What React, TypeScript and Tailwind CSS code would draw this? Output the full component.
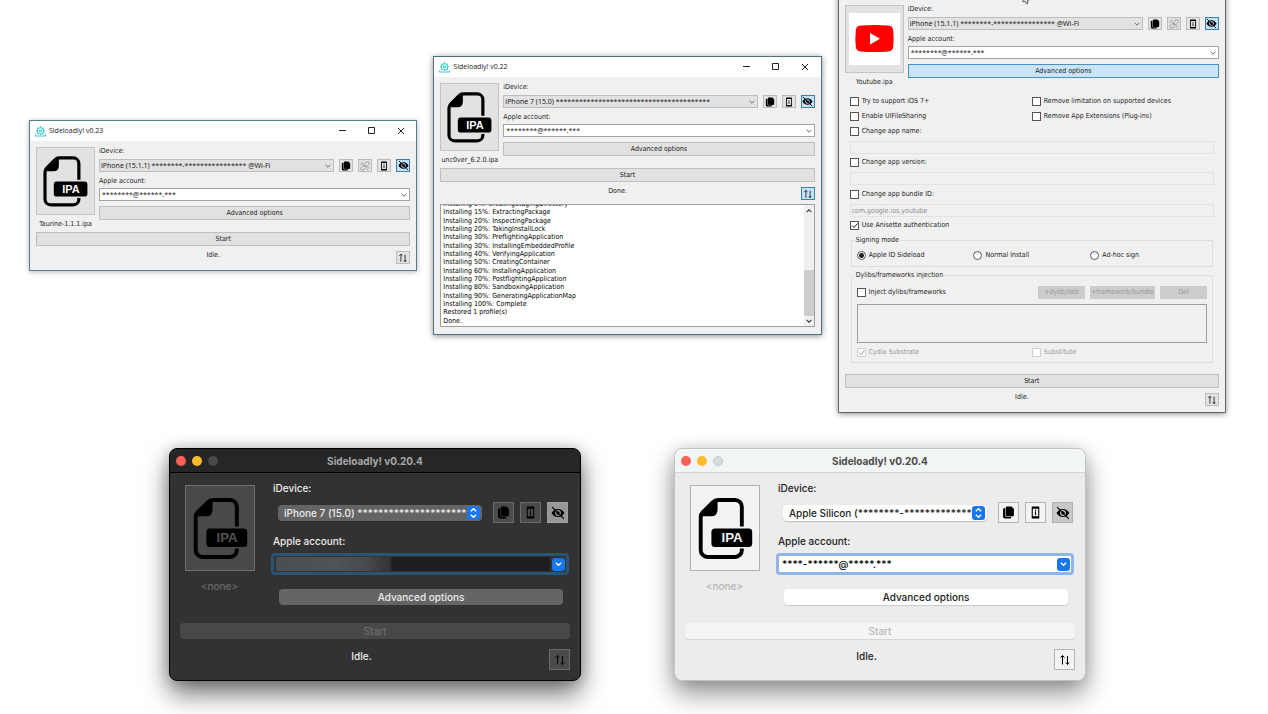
import { ReactNode } from 'react';
import clsx from 'clsx';

type Theme = 'dark' | 'light';

interface DeviceFormProps {
  id: string;
  device: string;
  fileName: string;
  artwork: ReactNode;
  withUnlink?: boolean;
  advancedOpen?: boolean;
}

const LOG_LINES = [
  'Installing 5%: CreatingStagingDirectory',
  'Installing 15%: ExtractingPackage',
  'Installing 20%: InspectingPackage',
  'Installing 20%: TakingInstallLock',
  'Installing 30%: PreflightingApplication',
  'Installing 30%: InstallingEmbeddedProfile',
  'Installing 40%: VerifyingApplication',
  'Installing 50%: CreatingContainer',
  'Installing 60%: InstallingApplication',
  'Installing 70%: PostflightingApplication',
  'Installing 80%: SandboxingApplication',
  'Installing 90%: GeneratingApplicationMap',
  'Installing 100%: Complete',
  'Restored 1 profile(s)',
  'Done.',
];

/* ---------- icons ---------- */

function IpaIcon({ className, textFill }: { className: string; textFill: string }) {
  return (
    <svg viewBox="0 0 210 255" className={className} aria-hidden="true">
      <path
        d="M157 123V62a21 21 0 0 0-21-21H84c-8 0-12 2-17 7L37 78c-5 5-7 9-7 16v102a21 21 0 0 0 21 21h85a21 21 0 0 0 21-21v-5"
        fill="none"
        stroke="#000"
        strokeWidth="12"
      />
      <path d="M82 39v31q0 21-21 21H28L42 70 66 46z" fill="#000" />
      <rect x="63" y="129" width="126" height="57" rx="11" fill="#000" />
      <text
        x="127"
        y="172"
        textAnchor="middle"
        fontFamily="Liberation Sans, sans-serif"
        fontWeight="700"
        fontSize="41"
        fill={textFill}
      >
        IPA
      </text>
    </svg>
  );
}

function YoutubeIcon() {
  return (
    <svg viewBox="0 0 51 52" className="h-[52px] w-[51px]" aria-hidden="true">
      <rect width="51" height="52" fill="#fff" />
      <path
        d="M12 12.5q13.500-1 27 0c3.500.2 4.800 1.700 5.200 5q.900 8 0 16c-.4 3.300-1.700 4.700-5.200 5q-13.500 1-27 0c-3.500-.3-4.800-1.700-5.200-5q-.9-8 0-16c.4-3.300 1.700-4.800 5.200-5z"
        fill="#f00"
      />
      <path d="M21 20l10 5.700L21 31.500z" fill="#fff" />
    </svg>
  );
}

function AppIcon() {
  return (
    <svg viewBox="0 0 32 32" className="size-[11px]" fill="none" strokeWidth="3" aria-hidden="true">
      <g stroke="#36cfc4">
        <circle cx="16" cy="14" r="9" />
        <circle cx="16" cy="14" r="3" />
        <path d="M16 1v4M16 23v3M3 14h4M25 14h4M7 5l3 3M25 5l-3 3M7 23l3-3M25 23l-3-3" />
      </g>
      <path d="M1 24v5h30v-5" stroke="#45c3ee" />
    </svg>
  );
}

function CopyIcon({ className }: { className: string }) {
  return (
    <svg viewBox="0 0 24 24" className={className} aria-hidden="true">
      <path d="M9 1h8.500L22 5.500V17a2 2 0 0 1-2 2H9a2 2 0 0 1-2-2V3a2 2 0 0 1 2-2z" />
      <path d="M6 4v14a2 2 0 0 0 2 2h9v1a2 2 0 0 1-2 2H5a3 3 0 0 1-3-3V6a2 2 0 0 1 2-2z" />
    </svg>
  );
}

function UnlinkIcon({ className }: { className: string }) {
  return (
    <svg
      viewBox="0 0 24 24"
      className={className}
      fill="none"
      stroke="#8c8c8c"
      strokeWidth="2"
      aria-hidden="true"
    >
      <path d="M11 8l4-5a4 4 0 0 1 6 6l-4 4a4 4 0 0 1-5 0M13 16l-4 5a4 4 0 0 1-6-6l4-4a4 4 0 0 1 5 0" />
      <path d="M5 2l3 4M1 7l5 1M19 22l-3-4M23 17l-5-1M9 15l6-6" />
    </svg>
  );
}

function PhoneInfoIcon({ className }: { className: string }) {
  return (
    <svg viewBox="0 0 24 24" className={className} aria-hidden="true">
      <path
        d="M6 1h12a1 1 0 0 1 1 1v20a1 1 0 0 1-1 1H6a1 1 0 0 1-1-1V2a1 1 0 0 1 1-1zM7 5v14h10V5z"
        fillRule="evenodd"
      />
      <path d="M11 7h2v2h-2zM11 10h2v7h-2z" />
    </svg>
  );
}

function EyeOffIcon({ className }: { className: string }) {
  return (
    <svg viewBox="0 0 24 24" className={className} aria-hidden="true">
      <path
        d="M12 5c5 0 9 3 11 7-2 4-6 7-11 7S3 16 1 12c2-4 6-7 11-7zm0 2a5 5 0 1 0 0 10 5 5 0 0 0 0-10z"
        fillRule="evenodd"
      />
      <circle cx="12" cy="12" r="3" />
      <path d="M2 2l20 20" stroke="#000" strokeWidth="2" />
    </svg>
  );
}

function SwapIcon({ className }: { className: string }) {
  return (
    <svg
      viewBox="0 0 24 24"
      className={className}
      fill="none"
      stroke="currentColor"
      strokeWidth="2"
      aria-hidden="true"
    >
      <path d="M7 21V3M3 7l4-4 4 4M17 4v17M14 17l3 4 3-4" />
    </svg>
  );
}

function Chevron({ className, up, thin }: { className: string; up?: boolean; thin?: boolean }) {
  return (
    <svg
      viewBox="0 0 10 6"
      className={clsx(className, up && 'rotate-180')}
      fill="none"
      stroke="currentColor"
      strokeWidth={thin ? 1.4 : 2}
      aria-hidden="true"
    >
      <path d="M1 1l4 4 4-4" />
    </svg>
  );
}

/* ---------- Windows look ---------- */

function WinToolButton({ label, pressed, children }: { label: string; pressed?: boolean; children: ReactNode }) {
  return (
    <button
      type="button"
      aria-label={label}
      className={clsx(
        'flex h-[13px] w-[14px] shrink-0 items-center justify-center border',
        pressed ? 'border-[#3c7fb1] bg-[#c5e1f7]' : 'border-[#bcbcbc] bg-[#e2e2e2]'
      )}
    >
      {children}
    </button>
  );
}

function WinButton({ className, children }: { className?: string; children: ReactNode }) {
  return (
    <button
      type="button"
      className={clsx(
        'flex h-[14px] w-full items-center justify-center border',
        className ?? 'border-[#bfbfbf] bg-[#e1e1e1]'
      )}
    >
      {children}
    </button>
  );
}

function WinFrame({ title, className, children }: { title: string; className: string; children: ReactNode }) {
  return (
    <section
      className={clsx(
        'min-w-0 flex-1 border bg-[#f0f0f0] font-["DejaVu_Sans_Condensed","Noto_Sans",sans-serif] text-[7px] leading-[7px] text-[#1c1c1c]',
        className
      )}
    >
      <header className="flex h-5 items-center bg-white pl-[5px]">
        <AppIcon />
        <h2 className='flex-1 pl-[3px] font-["Open_Sans",sans-serif] leading-[8px]'>{title}</h2>
        <div className="flex pr-px">
          <button type="button" aria-label="Minimize" className="flex h-5 w-[29px] items-center justify-center">
            <svg viewBox="0 0 8 8" className="size-2" stroke="#222">
              <path d="M0 3.500h7" />
            </svg>
          </button>
          <button type="button" aria-label="Maximize" className="flex h-5 w-[29px] items-center justify-center">
            <svg viewBox="0 0 8 8" className="size-2" fill="none" stroke="#222">
              <path d="M.5.5h6v6h-6z" />
            </svg>
          </button>
          <button type="button" aria-label="Close" className="flex h-5 w-[29px] items-center justify-center">
            <svg viewBox="0 0 8 8" className="size-2" stroke="#222">
              <path d="M1 1l6 6M7 1L1 7" />
            </svg>
          </button>
        </div>
      </header>
      <div className="p-[6px]">{children}</div>
    </section>
  );
}

function WinDeviceForm({ id, device, fileName, artwork, withUnlink, advancedOpen }: DeviceFormProps) {
  return (
    <div className="flex gap-1">
      <div className="w-[59px] shrink-0">
        <button
          type="button"
          aria-label="Choose IPA"
          className="flex h-[68px] w-full items-center justify-center border border-[#c4c4c4] bg-[#e2e2e2]"
        >
          {artwork}
        </button>
        <p className="pt-[6px] text-center whitespace-nowrap">{fileName}</p>
      </div>
      <div className="min-w-0 flex-1">
        <label htmlFor={`${id}-device`} className="block pt-px">
          iDevice:
        </label>
        <div className="flex gap-[5px] pt-1">
          <div className="relative min-w-0 flex-1">
            <select
              id={`${id}-device`}
              className='block h-[13px] w-full appearance-none border border-[#bdbdbd] bg-[#e2e2e2] pl-px font-["Noto_Sans",sans-serif]'
            >
              <option>{device}</option>
            </select>
            <Chevron thin className="pointer-events-none absolute top-[5px] right-[3px] h-1 w-[6px] text-[#555]" />
          </div>
          <WinToolButton label="Copy">
            <CopyIcon className="size-[10px]" />
          </WinToolButton>
          {withUnlink && (
            <WinToolButton label="Unlink">
              <UnlinkIcon className="size-[10px]" />
            </WinToolButton>
          )}
          <WinToolButton label="Device info">
            <PhoneInfoIcon className="size-[10px]" />
          </WinToolButton>
          <WinToolButton label="Hide private data" pressed>
            <EyeOffIcon className="size-[11px]" />
          </WinToolButton>
        </div>
        <label htmlFor={`${id}-account`} className="block pt-[6px]">
          Apple account:
        </label>
        <div className="relative pt-[3px]">
          <input
            id={`${id}-account`}
            defaultValue="********@******.***"
            className='block h-[13px] w-full border border-[#a5a5a5] bg-white pl-[2px] font-["Noto_Sans",sans-serif]'
          />
          <Chevron thin className="pointer-events-none absolute top-2 right-[3px] h-1 w-[6px] text-[#444]" />
        </div>
        <div className="pt-[5px]">
          <WinButton className={advancedOpen ? 'border-[#4d8fc4] bg-[#cce4f7]' : undefined}>Advanced options</WinButton>
        </div>
      </div>
    </div>
  );
}

function WinStatus({ status, pressed }: { status: string; pressed?: boolean }) {
  return (
    <div className="flex pt-[5px]">
      <p className="flex-1 pt-px pr-[6px] text-center">{status}</p>
      <WinToolButton label="Toggle log" pressed={pressed}>
        <SwapIcon className="size-[10px]" />
      </WinToolButton>
    </div>
  );
}

function WinCheck({ label, checked, disabled }: { label: string; checked?: boolean; disabled?: boolean }) {
  return (
    <label className={clsx('flex h-[15px] items-center gap-[3px]', disabled && 'text-[#999]')}>
      <span className="grid">
        <input
          type="checkbox"
          defaultChecked={checked}
          disabled={disabled}
          className={clsx(
            'peer col-start-1 row-start-1 size-[9px] appearance-none border bg-white',
            disabled ? 'border-[#d0d0d0]' : 'border-[#555]'
          )}
        />
        <svg
          viewBox="0 0 9 9"
          className="pointer-events-none invisible col-start-1 row-start-1 size-[9px] peer-checked:visible"
          fill="none"
          stroke="currentColor"
        >
          <path d="M2 4.500l2 2 3.500-4" />
        </svg>
      </span>
      {label}
    </label>
  );
}

function WinRadio({ label, checked }: { label: string; checked?: boolean }) {
  return (
    <label className="flex h-[15px] items-center gap-[3px]">
      <input
        type="radio"
        name="signing-mode"
        defaultChecked={checked}
        className="size-[9px] appearance-none rounded-full border border-[#555] bg-white checked:bg-[radial-gradient(circle,#222_2px,#fff_3px)]"
      />
      {label}
    </label>
  );
}

function LockedField({ label, value }: { label: string; value?: string }) {
  return (
    <div className="pt-[2px] pb-px">
      <input
        aria-label={label}
        defaultValue={value}
        disabled
        className="block h-[13px] w-full border border-[#e2e2e2] pl-px text-[#8d8d8d]"
      />
    </div>
  );
}

function AdvancedOptions() {
  return (
    <div className="px-[5px] pt-2 pb-[11px]">
      <div className="grid grid-cols-2">
        <WinCheck label="Try to support iOS 7+" />
        <WinCheck label="Remove limitation on supported devices" />
        <WinCheck label="Enable UIFileSharing" />
        <WinCheck label="Remove App Extensions (Plug-ins)" />
      </div>
      <WinCheck label="Change app name:" />
      <LockedField label="App name" />
      <WinCheck label="Change app version:" />
      <LockedField label="App version" />
      <div className="pt-px">
        <WinCheck label="Change app bundle ID:" />
      </div>
      <LockedField label="App bundle ID" value="com.google.ios.youtube" />
      <WinCheck label="Use Anisette authentication" checked />
      <fieldset className="mx-px mt-[3px] border border-[#dedede] px-[5px] pb-[3px]">
        <legend className="-ml-[2px] px-px leading-2">Signing mode</legend>
        <div className="grid grid-cols-3 pt-1">
          <WinRadio label="Apple ID Sideload" checked />
          <WinRadio label="Normal Install" />
          <WinRadio label="Ad-hoc sign" />
        </div>
      </fieldset>
      <fieldset className="mx-px mt-1 border border-[#dedede] px-[5px] pb-[2px]">
        <legend className="-ml-[2px] px-px leading-2">Dylibs/frameworks injection</legend>
        <div className="flex items-center gap-[5px] pt-[7px] text-[#999]">
          <div className="flex h-[13px] flex-1 items-center text-[#1c1c1c]">
            <WinCheck label="Inject dylibs/frameworks" />
          </div>
          <button type="button" disabled className="h-[13px] w-[47px] bg-[#cccccc]">
            +dylib/deb
          </button>
          <button type="button" disabled className="h-[13px] w-[65px] bg-[#cccccc] whitespace-nowrap">
            +framework/bundle
          </button>
          <button type="button" disabled className="h-[13px] w-[47px] bg-[#cccccc]">
            Del
          </button>
        </div>
        <div className="pt-[5px]">
          <ul aria-label="Injected files" className="h-[39px] border border-[#9c9c9c]" />
        </div>
        <div className="grid grid-cols-2 pt-[2px]">
          <WinCheck label="Cydia Substrate" checked disabled />
          <WinCheck label="Substitute" disabled />
        </div>
      </fieldset>
    </div>
  );
}

function LogPanel() {
  return (
    <div className="mt-1 mb-px flex h-[123px] overflow-hidden border border-[#a0a0a0] bg-white">
      <ol className="-mt-[5px] flex h-[125px] flex-1 flex-col justify-between pl-[2px] leading-2 text-black">
        {LOG_LINES.map((line) => (
          <li key={line}>{line}</li>
        ))}
      </ol>
      <div className="flex w-[10px] flex-col items-center bg-[#f0f0f0] text-[#444]">
        <Chevron up className="my-1 h-1 w-[6px]" />
        <div className="mt-auto h-[46px] w-full bg-[#cdcdcd]" />
        <Chevron className="my-[3px] h-1 w-[6px]" />
      </div>
    </div>
  );
}

/* ---------- macOS look ---------- */

function MacToolButton({
  label,
  theme,
  active,
  children,
}: {
  label: string;
  theme: Theme;
  active?: boolean;
  children: ReactNode;
}) {
  const dark = theme === 'dark';
  return (
    <button
      type="button"
      aria-label={label}
      className={clsx(
        'flex size-[21px] shrink-0 items-center justify-center border text-black',
        dark && !active && 'border-[#6a6a6a] bg-[#4b4b4b]',
        dark && active && 'border-[#a0a0a0] bg-[#979797]',
        !dark && !active && 'border-[#b4b4b4] bg-[#f3f3f3]',
        !dark && active && 'border-[#b0b0b0] bg-[#c8c8c8]'
      )}
    >
      {children}
    </button>
  );
}

function MacWindow({ theme, device }: { theme: Theme; device: string }) {
  const dark = theme === 'dark';
  return (
    <section
      className={clsx(
        'min-w-0 flex-1 overflow-hidden rounded-[8px] border font-[Inter,sans-serif] text-[10px] leading-[14px] font-medium',
        dark
          ? 'border-black bg-[#323232] text-[#ececec] shadow-[0_13px_26px_rgba(0,0,0,0.55),0_0_14px_rgba(0,0,0,0.2)]'
          : 'border-[#bfc4c3] bg-[#ececec] text-[#222] shadow-[0_13px_26px_rgba(0,0,0,0.42),0_0_14px_rgba(0,0,0,0.12)]'
      )}
    >
      <header
        className={clsx(
          'flex h-6 items-center border-b px-[6px]',
          dark ? 'border-black bg-[#262626]' : 'border-[#d0d6d4] bg-[#f1f6f5]'
        )}
      >
        <div className="flex w-[42px] gap-[6px]">
          <button type="button" aria-label="Close" className="size-[10px] rounded-full bg-[#fe5f57]" />
          <button type="button" aria-label="Minimize" className="size-[10px] rounded-full bg-[#febb2e]" />
          <button
            type="button"
            aria-label="Zoom"
            className={clsx('size-[10px] rounded-full', dark ? 'bg-[#4a4a4a]' : 'border border-[#c5cbc9] bg-[#d6dbda]')}
          />
        </div>
        <h2 className={clsx('flex-1 pr-[42px] text-center font-bold', dark ? 'text-[#a9a9a9]' : 'text-[#4a4a4a]')}>
          Sideloadly! v0.20.4
        </h2>
      </header>

      <div className="px-[10px] pt-2 pb-[10px]">
        <div className="flex gap-4">
          <div className="w-[75px] shrink-0 pt-1 pl-[5px]">
            <button
              type="button"
              aria-label="Choose IPA"
              className={clsx('flex border', dark ? 'border-[#707070] bg-[#494949]' : 'border-[#b0b0b0] bg-[#f3f3f3]')}
            >
              <IpaIcon className="h-[84px] w-[68px]" textFill={dark ? '#555' : '#f3f3f3'} />
            </button>
            <p className={clsx('pt-2 pr-px text-center', dark ? 'text-[#686868]' : 'text-[#b4b4b4]')}>&lt;none&gt;</p>
          </div>

          <div className="min-w-0 flex-1 pr-px">
            <label htmlFor={`mac-${theme}-device`} className="block pl-[2px]">
              iDevice:
            </label>
            <div className="flex items-center gap-[6px] pt-[7px] pr-px pl-[7px]">
              <div className="relative mr-[5px] min-w-0 flex-1">
                <select
                  id={`mac-${theme}-device`}
                  className={clsx(
                    'block h-4 w-full appearance-none rounded-[4px] pr-[15px] pl-[6px]',
                    dark ? 'bg-[#646464]' : 'bg-white shadow-[0_1px_1px_rgba(0,0,0,0.2)]'
                  )}
                >
                  <option>{device}</option>
                </select>
                <span className="pointer-events-none absolute top-px right-[2px] flex h-[14px] w-[13px] flex-col items-center justify-center gap-[2px] rounded-[3px] bg-[#1677f0] text-white">
                  <Chevron up className="h-1 w-[7px]" />
                  <Chevron className="h-1 w-[7px]" />
                </span>
              </div>
              <MacToolButton label="Copy" theme={theme}>
                <CopyIcon className="size-[13px]" />
              </MacToolButton>
              <MacToolButton label="Device info" theme={theme}>
                <PhoneInfoIcon className="size-[13px]" />
              </MacToolButton>
              <MacToolButton label="Hide private data" theme={theme} active>
                <EyeOffIcon className="size-[14px]" />
              </MacToolButton>
            </div>
            <label htmlFor={`mac-${theme}-account`} className="block pt-[11px] pl-[2px]">
              Apple account:
            </label>
            <div
              className={clsx(
                'mt-[5px] flex h-[22px] items-center rounded-[4px] border-[3px]',
                dark ? 'border-[#2a5570] bg-[#323232]' : 'border-[#8fb4e8] bg-white'
              )}
            >
              <input
                id={`mac-${theme}-account`}
                defaultValue={dark ? '' : '****-******@*****.***'}
                className={clsx(
                  'h-[14px] min-w-0 flex-1',
                  dark
                    ? 'ml-[2px] bg-[linear-gradient(to_right,#4a4e50,#505456_60px,#484a4c_90px,#333_114px,#1e1e1e_116px)]'
                    : 'pl-[3px] text-black'
                )}
              />
              <button
                type="button"
                aria-label="Show accounts"
                className="mr-px ml-[2px] flex size-[13px] items-center justify-center rounded-[3px] bg-[#1677f0] text-white"
              >
                <Chevron className="h-1 w-[7px]" />
              </button>
            </div>
            <div className="pt-[14px] pr-[6px] pl-2">
              <button
                type="button"
                className={clsx(
                  'block h-4 w-full rounded-[4px]',
                  dark ? 'bg-[#656565]' : 'bg-white shadow-[0_1px_1px_rgba(0,0,0,0.15)]'
                )}
              >
                Advanced options
              </button>
            </div>
          </div>
        </div>

        <button
          type="button"
          disabled
          className={clsx(
            'mt-[18px] block h-4 w-full rounded-[4px]',
            dark ? 'bg-[#484848] text-[#6c6c6c]' : 'bg-[#f5f5f5] text-[#b9b9b9] shadow-[0_1px_1px_rgba(0,0,0,0.1)]'
          )}
        >
          Start
        </button>
        <div className="flex pt-[10px]">
          <p className="flex-1 pr-[6px] text-center">Idle.</p>
          <MacToolButton label="Toggle log" theme={theme}>
            <SwapIcon className="size-3" />
          </MacToolButton>
        </div>
      </div>
    </section>
  );
}

export default function App() {
  const ipa = <IpaIcon className="mr-[2px] h-[68px] w-[56px] shrink-0" textFill="#fff" />;

  return (
    <main className="relative flex min-h-screen flex-col overflow-hidden bg-white">
      <div className="-mt-[22px] flex items-center gap-4 pr-[42px] pl-[29px]">
        <WinFrame title="Sideloadly! v0.23" className="border-[#567f8c] shadow-[0_1px_5px_rgba(0,0,0,0.3)]">
          <WinDeviceForm
            id="taurine"
            device="iPhone (15.1.1) ********-**************** @Wi-Fi"
            fileName="Taurine-1.1.1.ipa"
            artwork={ipa}
            withUnlink
          />
          <div className="pt-1">
            <WinButton>Start</WinButton>
          </div>
          <WinStatus status="Idle." />
        </WinFrame>

        <WinFrame title="Sideloadly! v0.22" className="border-[#4f7186] shadow-[0_1px_6px_rgba(0,0,0,0.45)]">
          <WinDeviceForm
            id="unc0ver"
            device="iPhone 7 (15.0) ****************************************"
            fileName="unc0ver_6.2.0.ipa"
            artwork={ipa}
          />
          <div className="pt-1">
            <WinButton>Start</WinButton>
          </div>
          <WinStatus status="Done." pressed />
          <LogPanel />
        </WinFrame>

        <WinFrame title="Sideloadly! v0.23" className="border-[#666] shadow-[0_1px_6px_rgba(0,0,0,0.45)]">
          <WinDeviceForm
            id="youtube"
            device="iPhone (15.1.1) ********-**************** @Wi-Fi"
            fileName="Youtube.ipa"
            artwork={<YoutubeIcon />}
            withUnlink
            advancedOpen
          />
          <AdvancedOptions />
          <WinButton>Start</WinButton>
          <WinStatus status="Idle." />
        </WinFrame>
      </div>

      <div className="flex gap-[93px] pt-[35px] pr-[182px] pl-[169px]">
        <MacWindow theme="dark" device="iPhone 7 (15.0) *************************" />
        <MacWindow theme="light" device="Apple Silicon (********-****************" />
      </div>

      {/* tip of the mouse pointer over the third window */}
      <svg viewBox="0 0 8 5" className="absolute top-0 left-[1022px] h-[5px] w-2" aria-hidden="true">
        <path d="M1 0v2l2-1 2 3 1-1-1-2 2-1" fill="#fff" stroke="#555" />
      </svg>
    </main>
  );
}
